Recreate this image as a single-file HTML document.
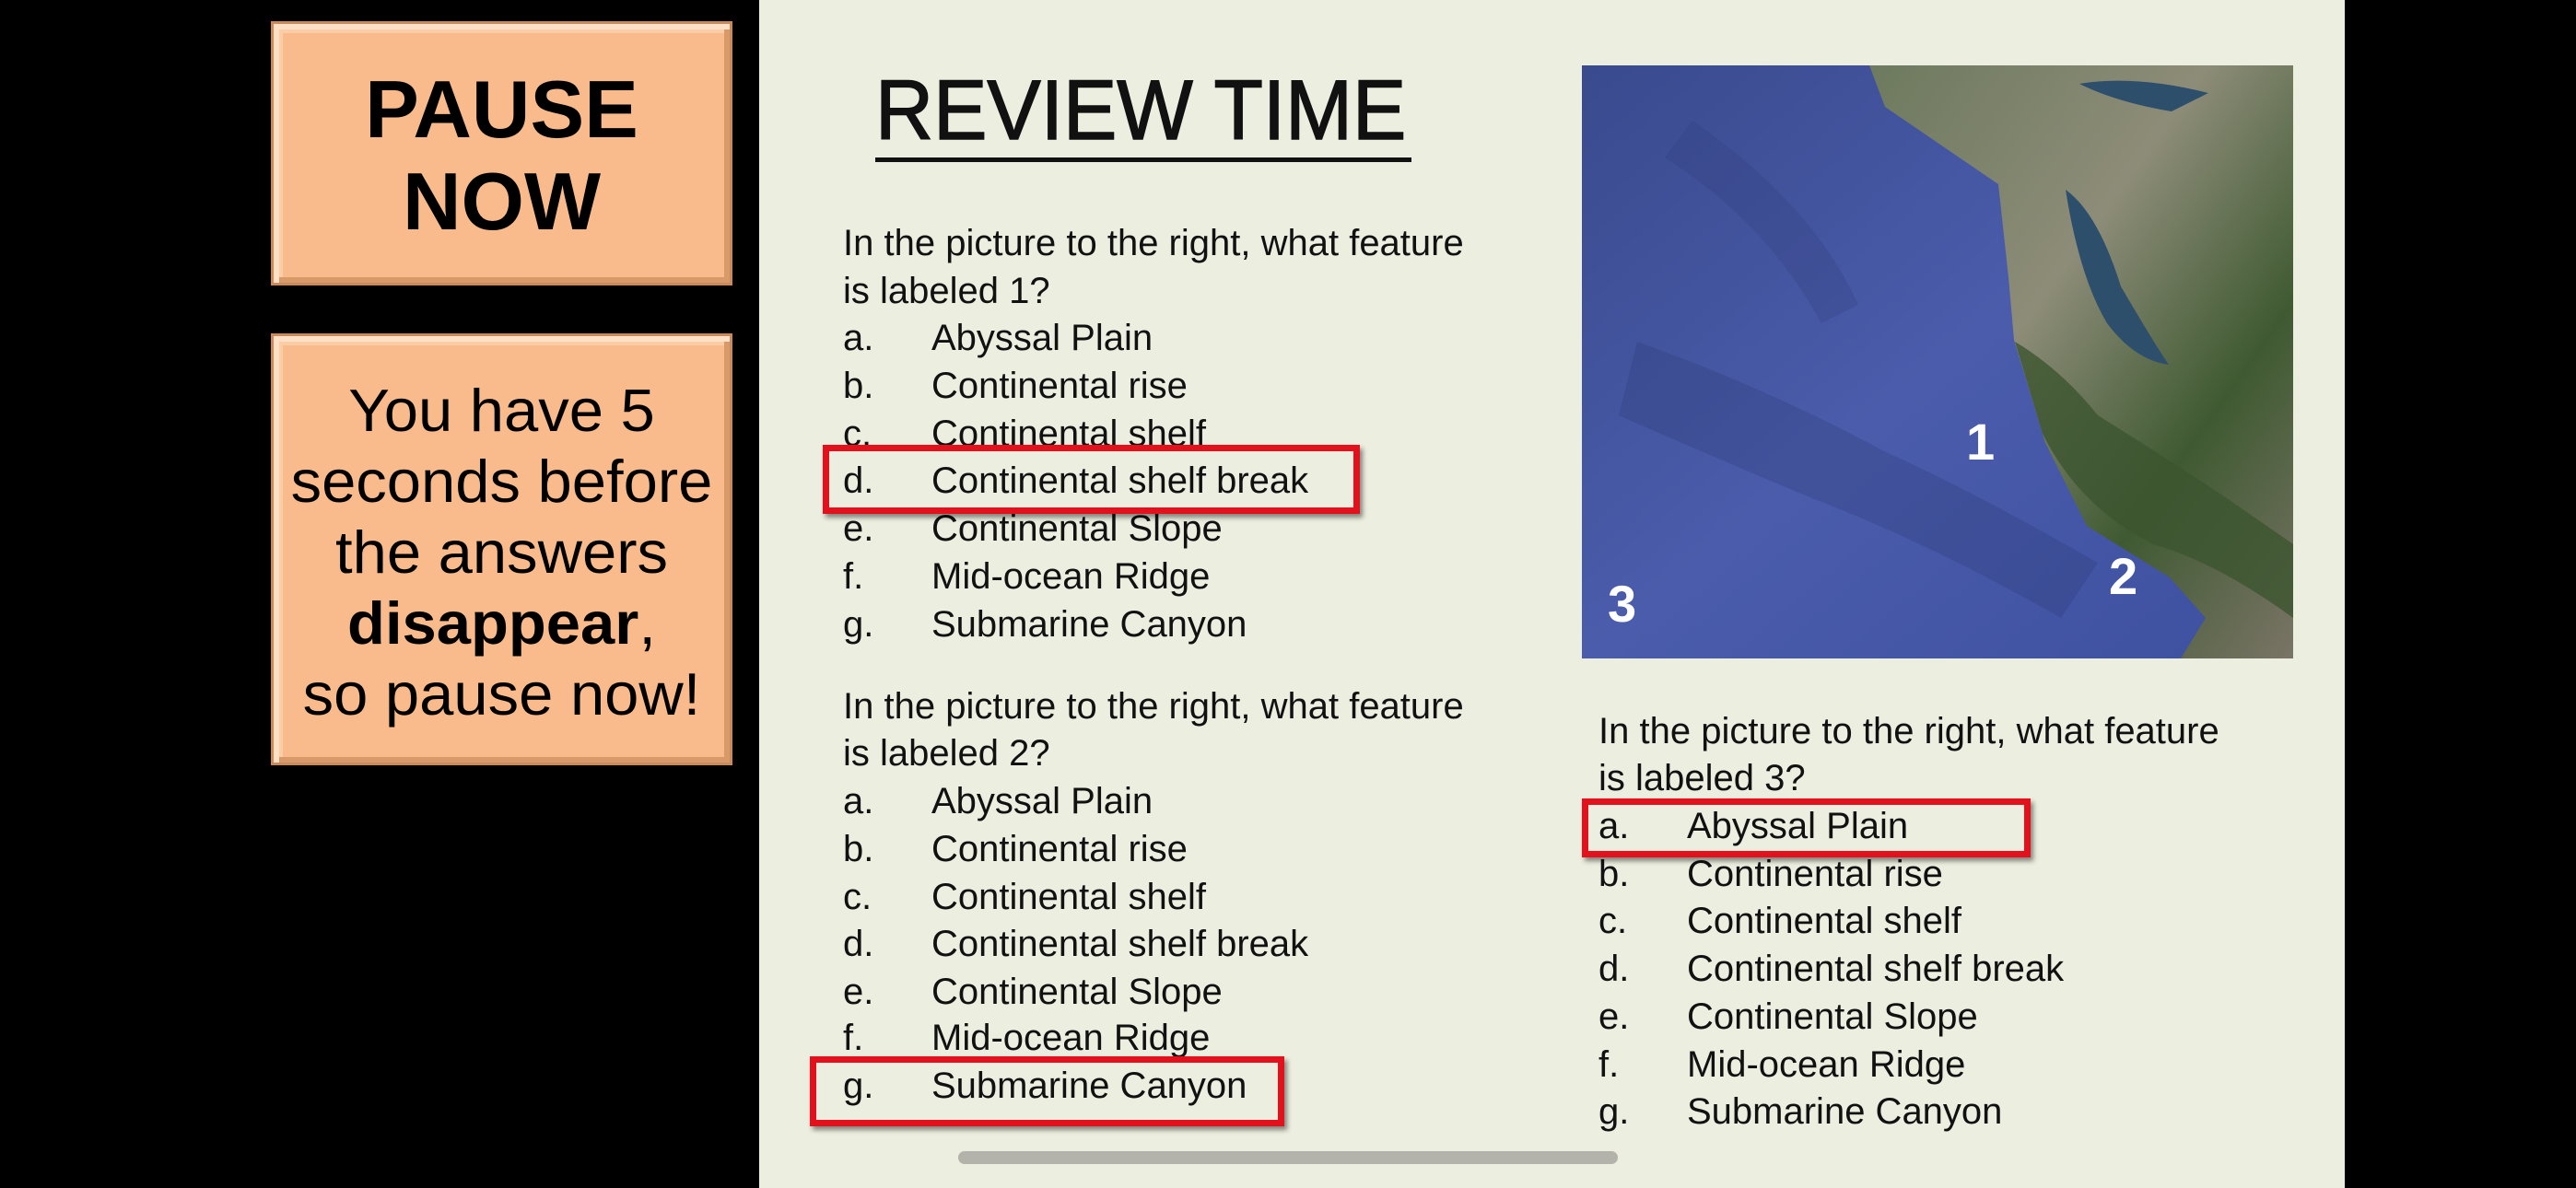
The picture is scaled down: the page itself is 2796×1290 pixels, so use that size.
<!DOCTYPE html>
<html><head><meta charset="utf-8"><style>
*{margin:0;padding:0;box-sizing:border-box}
body{width:2796px;height:1290px;background:#000;position:relative;overflow:hidden;font-family:"Liberation Sans",Arial,sans-serif}
.slide{position:absolute;left:824px;top:0;width:1721px;height:1290px;background:#eceedf}
.box{position:absolute;left:294px;width:501px;background:#f9bb8b;border:3px solid #c98a5c;box-shadow:inset 6px 6px 0 #fde0c6,inset -6px -6px 0 #d99a6a, inset 10px 10px 0 #fbcda6}
.t{position:absolute;left:0;width:100%;text-align:center;color:#000;white-space:nowrap}
.l{position:absolute;font-size:40px;line-height:52px;height:52px;color:#111;white-space:nowrap;transform:scaleX(1.0);transform-origin:left center}
.red{position:absolute;border:7px solid #e3111b;box-shadow:3px 4px 5px rgba(0,0,0,.45)}
.num{position:absolute;color:#fff;font-weight:bold;font-size:56px;line-height:56px}
</style></head><body>
<div class="box" style="top:23px;height:287px">
 <div class="t" style="top:48px;font-size:88px;font-weight:bold;line-height:90px">PAUSE</div>
 <div class="t" style="top:148px;font-size:88px;font-weight:bold;line-height:90px">NOW</div>
</div>
<div class="box" style="top:362px;height:469px">
 <div class="t" style="top:42px;font-size:65px;line-height:77px;transform:scaleX(1.03)">You have 5<br>seconds before<br>the answers<br><b>disappear</b>,<br>so pause now!</div>
</div>
<div class="slide"></div>
<div style="position:absolute;left:950px;top:70px;font-size:92px;line-height:100px;color:#111;transform:scaleX(.95);transform-origin:left;-webkit-text-stroke:1.5px #111">REVIEW TIME</div>
<div style="position:absolute;left:950px;top:171px;width:582px;height:5px;background:#111"></div>

<div class="l" style="left:915px;top:238px">In the picture to the right, what feature</div>
<div class="l" style="left:915px;top:290px">is labeled 1?</div>
<div class="l" style="left:915px;top:341px">a.</div><div class="l" style="left:1011px;top:341px">Abyssal Plain</div>
<div class="l" style="left:915px;top:393px">b.</div><div class="l" style="left:1011px;top:393px">Continental rise</div>
<div class="l" style="left:915px;top:445px">c.</div><div class="l" style="left:1011px;top:445px">Continental shelf</div>
<div class="l" style="left:915px;top:496px">d.</div><div class="l" style="left:1011px;top:496px">Continental shelf break</div>
<div class="l" style="left:915px;top:548px">e.</div><div class="l" style="left:1011px;top:548px">Continental Slope</div>
<div class="l" style="left:915px;top:600px">f.</div><div class="l" style="left:1011px;top:600px">Mid-ocean Ridge</div>
<div class="l" style="left:915px;top:652px">g.</div><div class="l" style="left:1011px;top:652px">Submarine Canyon</div>

<div class="l" style="left:915px;top:741px">In the picture to the right, what feature</div>
<div class="l" style="left:915px;top:792px">is labeled 2?</div>
<div class="l" style="left:915px;top:844px">a.</div><div class="l" style="left:1011px;top:844px">Abyssal Plain</div>
<div class="l" style="left:915px;top:896px">b.</div><div class="l" style="left:1011px;top:896px">Continental rise</div>
<div class="l" style="left:915px;top:948px">c.</div><div class="l" style="left:1011px;top:948px">Continental shelf</div>
<div class="l" style="left:915px;top:999px">d.</div><div class="l" style="left:1011px;top:999px">Continental shelf break</div>
<div class="l" style="left:915px;top:1051px">e.</div><div class="l" style="left:1011px;top:1051px">Continental Slope</div>
<div class="l" style="left:915px;top:1101px">f.</div><div class="l" style="left:1011px;top:1101px">Mid-ocean Ridge</div>
<div class="l" style="left:915px;top:1153px">g.</div><div class="l" style="left:1011px;top:1153px">Submarine Canyon</div>

<div class="l" style="left:1735px;top:768px">In the picture to the right, what feature</div>
<div class="l" style="left:1735px;top:819px">is labeled 3?</div>
<div class="l" style="left:1735px;top:871px">a.</div><div class="l" style="left:1831px;top:871px">Abyssal Plain</div>
<div class="l" style="left:1735px;top:923px">b.</div><div class="l" style="left:1831px;top:923px">Continental rise</div>
<div class="l" style="left:1735px;top:974px">c.</div><div class="l" style="left:1831px;top:974px">Continental shelf</div>
<div class="l" style="left:1735px;top:1026px">d.</div><div class="l" style="left:1831px;top:1026px">Continental shelf break</div>
<div class="l" style="left:1735px;top:1078px">e.</div><div class="l" style="left:1831px;top:1078px">Continental Slope</div>
<div class="l" style="left:1735px;top:1130px">f.</div><div class="l" style="left:1831px;top:1130px">Mid-ocean Ridge</div>
<div class="l" style="left:1735px;top:1181px">g.</div><div class="l" style="left:1831px;top:1181px">Submarine Canyon</div>

<div class="red" style="left:893px;top:483px;width:583px;height:75px"></div>
<div class="red" style="left:879px;top:1147px;width:515px;height:76px"></div>
<div class="red" style="left:1717px;top:867px;width:487px;height:64px"></div>

<svg style="position:absolute;left:1717px;top:71px" width="772" height="644" viewBox="0 0 772 644">
<defs><linearGradient id="o" x1="0" y1="0" x2="1" y2="1"><stop offset="0" stop-color="#3a4a8e"/><stop offset=".5" stop-color="#4a5cab"/><stop offset="1" stop-color="#3d4f9f"/></linearGradient>
<linearGradient id="g" x1="0" y1="0" x2="1" y2="1"><stop offset="0" stop-color="#6d7a5e"/><stop offset=".4" stop-color="#8d8c78"/><stop offset=".7" stop-color="#3f5a32"/><stop offset="1" stop-color="#7a7466"/></linearGradient></defs>
<rect width="772" height="644" fill="url(#o)"/>
<path d="M60 300 Q200 350 330 420 Q420 460 560 540 L520 600 Q380 520 250 470 Q130 420 40 380Z" fill="#2f3c78" opacity=".3"/>
<path d="M120 60 Q250 150 300 260 L260 280 Q200 170 90 100Z" fill="#2f3c78" opacity=".25"/>
<path d="M312 0 L329 45 L452 129 L463 230 L469 298 L503 410 L548 500 L638 556 L677 600 L650 644 L772 644 L772 0Z" fill="url(#g)"/>
<path d="M525 135 Q560 160 585 240 Q620 300 637 325 Q600 320 570 280 Q540 230 525 135Z" fill="#2e4f6c"/>
<path d="M470 300 Q520 330 560 380 Q640 430 700 470 L772 520 L772 600 Q690 540 620 520 Q540 480 500 400Z" fill="#3c5530" opacity=".8"/>
<path d="M540 20 Q600 10 680 30 L640 50 Q580 40 540 20Z" fill="#2e4f6c"/>
</svg>
<div class="num" style="left:2134px;top:452px">1</div>
<div class="num" style="left:2289px;top:598px">2</div>
<div class="num" style="left:1745px;top:628px">3</div>

<div style="position:absolute;left:1040px;top:1250px;width:716px;height:14px;border-radius:7px;background:#b3b3ab"></div>
</body></html>
